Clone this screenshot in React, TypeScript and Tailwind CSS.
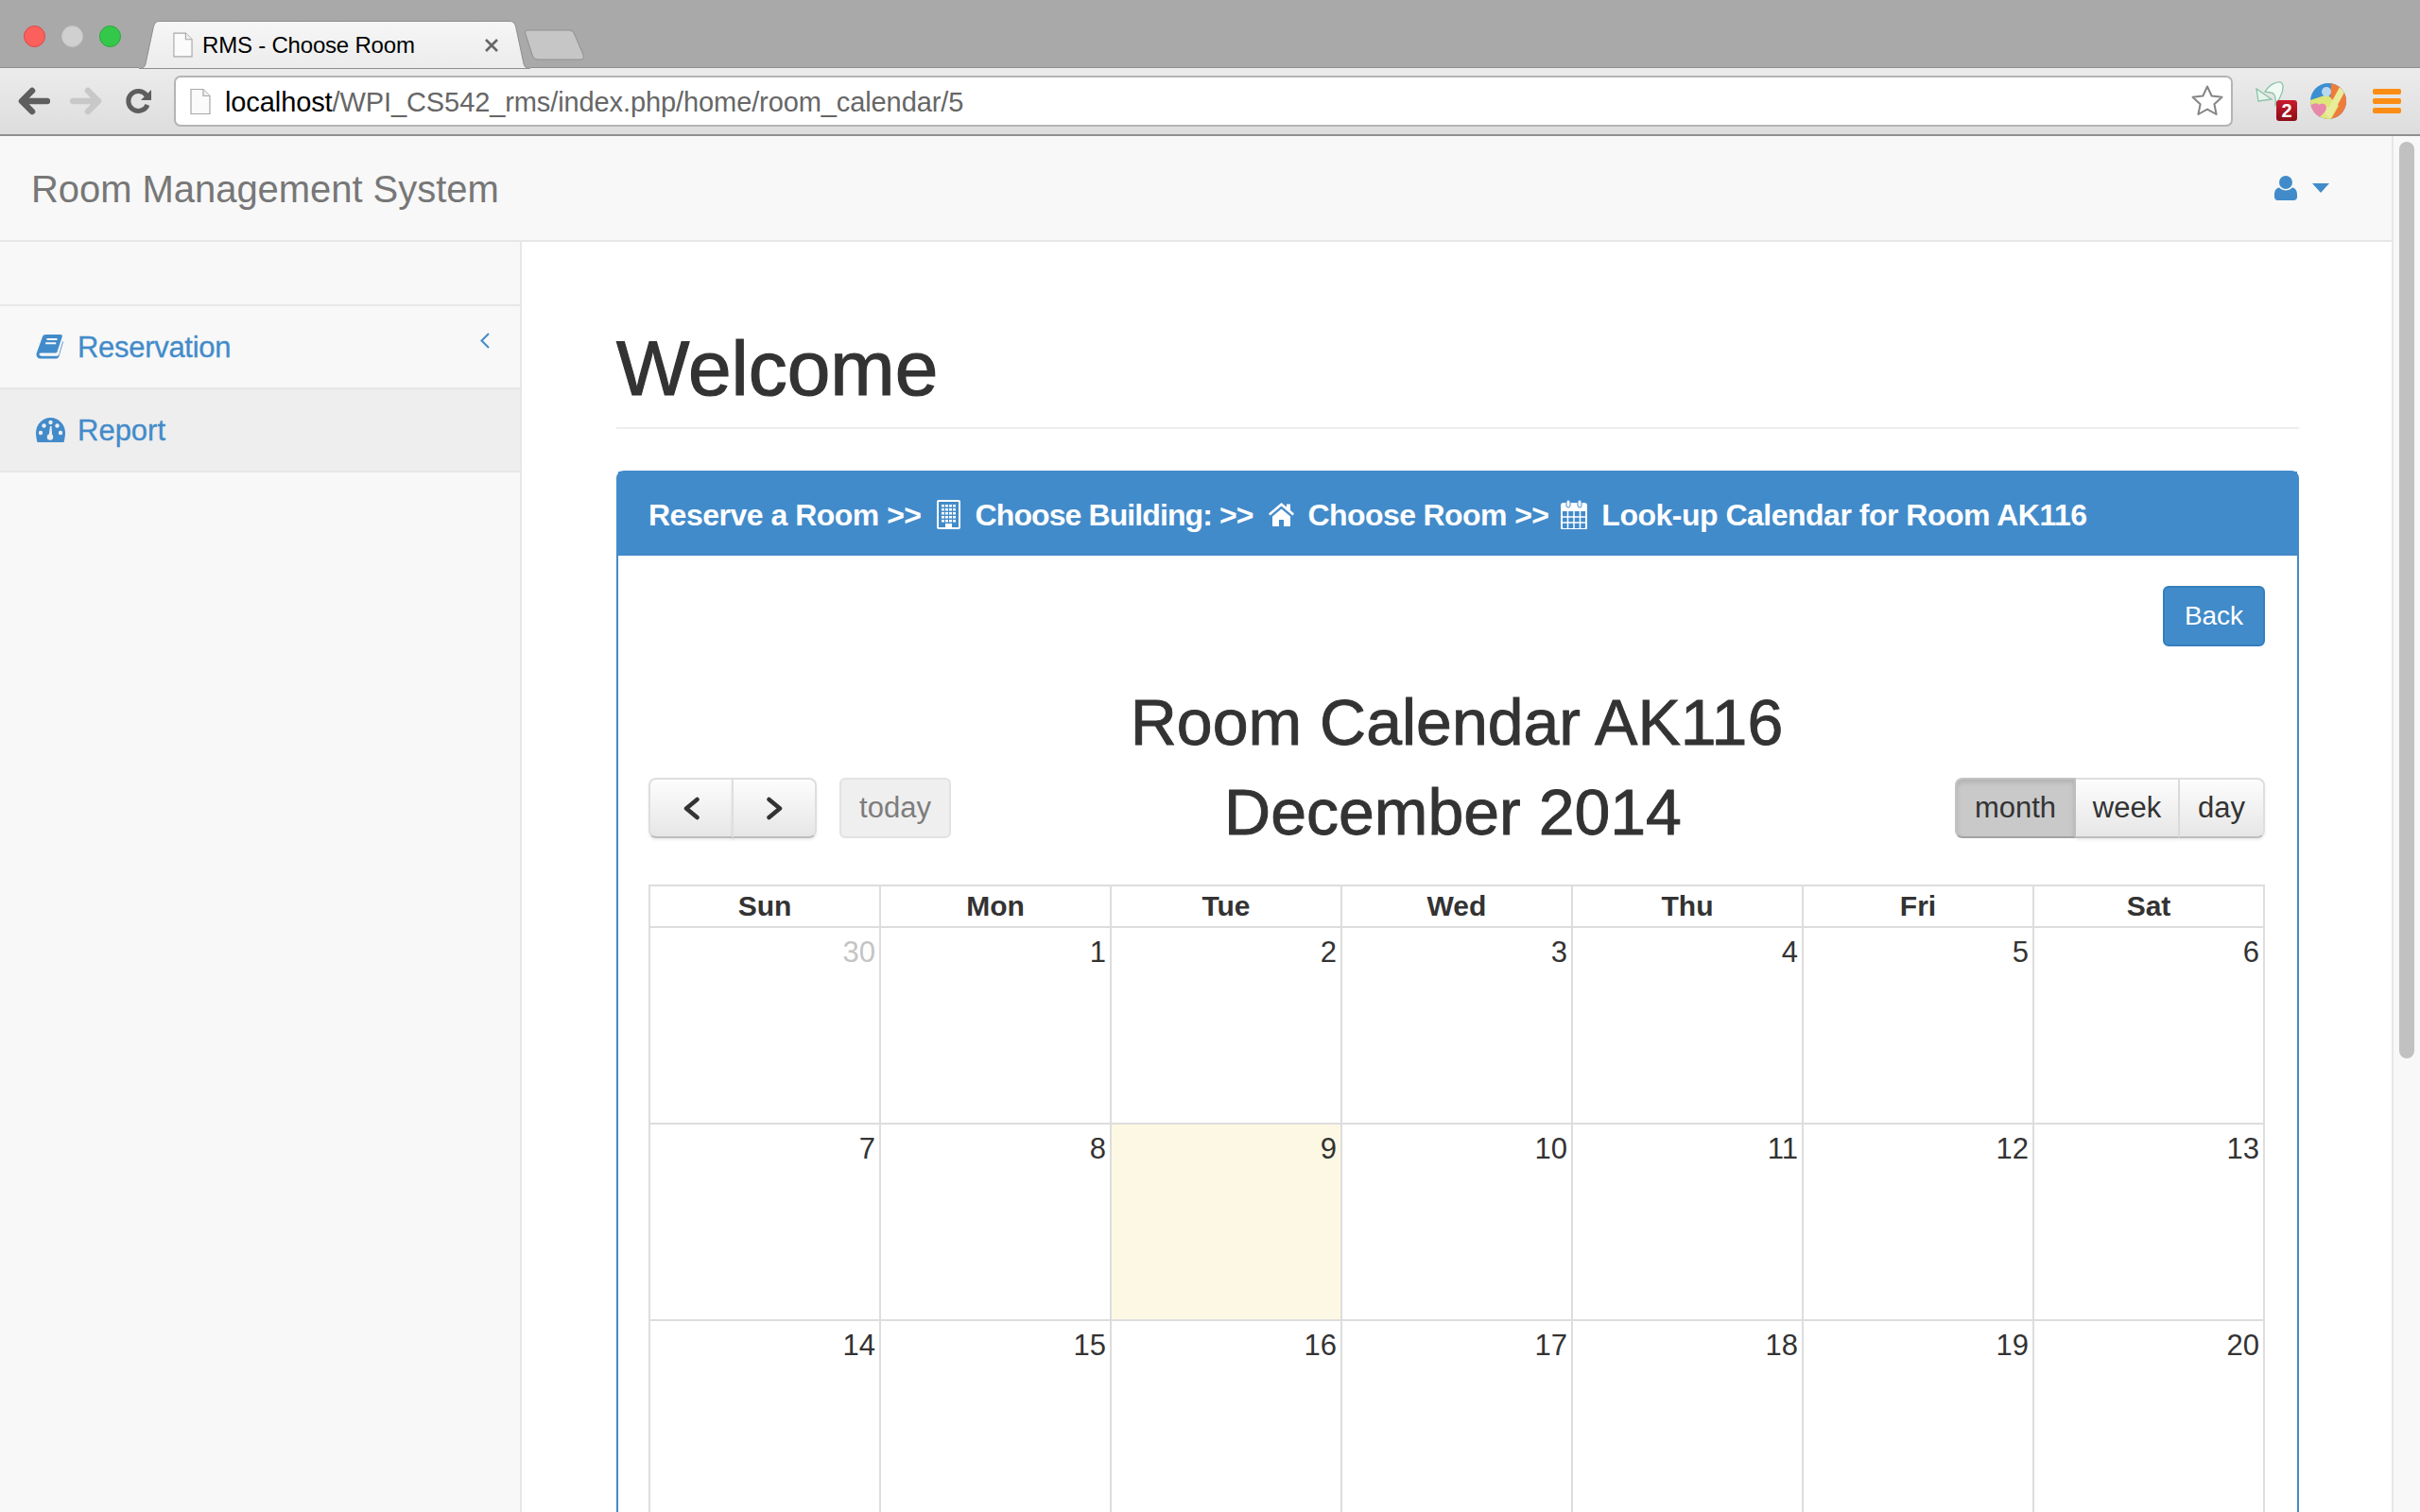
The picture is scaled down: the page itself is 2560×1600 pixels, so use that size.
const weeks: { d: number; muted?: boolean; today?: boolean }[][] = [
  [{ d: 30, muted: true }, { d: 1 }, { d: 2 }, { d: 3 }, { d: 4 }, { d: 5 }, { d: 6 }],
  [{ d: 7 }, { d: 8 }, { d: 9, today: true }, { d: 10 }, { d: 11 }, { d: 12 }, { d: 13 }],
  [{ d: 14 }, { d: 15 }, { d: 16 }, { d: 17 }, { d: 18 }, { d: 19 }, { d: 20 }],
];
const days = ["Sun", "Mon", "Tue", "Wed", "Thu", "Fri", "Sat"];

function PageIcon({ w, h }: { w: number; h: number }) {
  return (
    <svg width={w} height={h} viewBox="0 0 22 28" className="shrink-0">
      <path d="M1 1h13l7 7v19H1z" fill="#fbfbfb" stroke="#a8a8a8" strokeWidth="1.2" />
      <path d="M14 1v7h7" fill="#efefef" stroke="#a8a8a8" strokeWidth="1.2" />
    </svg>
  );
}

function Light({ color, border }: { color: string; border: string }) {
  return <span className="block w-[23px] h-[23px] rounded-full" style={{ background: color, border: `1px solid ${border}` }} />;
}

function BookIcon() {
  return (
    <svg width="29" height="27" viewBox="0 0 29 27" className="shrink-0 -mt-[2px]" fill="currentColor">
      <path d="M10 1h16c1.6 0 2.2 1 1.8 2.3L22.6 19c-.4 1.2-1.1 1.6-2.3 1.6H5.5C3.6 20.6 3 22 4 23c.6.6 1.4.7 2.2.7h15.6c1.4 0 2-.6 2.5-1.8L28.4 8l.6.8-4.3 14.4c-.6 2.2-1.8 3.4-4 3.4H5.5C2 26.6 0 24.2 .6 21z" />
      <path d="M10 1C8.4 1 7.4 2 7 3.2L.6 21c.6-1.6 2-2.4 4-2.4" />
      <path d="M11.5 6h11M10.2 10.2h11" stroke="#f8f8f8" strokeWidth="2" fill="none" />
    </svg>
  );
}

function GaugeIcon() {
  return (
    <svg width="31" height="26" viewBox="0 0 31 26" className="shrink-0" fill="currentColor">
      <path d="M15.5 0C7 0 0 7 0 16c0 3.500 .6 6.500 1.500 10h28c.9-3.500 1.500-6.500 1.500-10C31 7 24 0 15.500 0z" />
      <g fill="#eeeeee">
        <circle cx="5" cy="16" r="2.200" />
        <circle cx="8.500" cy="8.500" r="2.200" />
        <circle cx="15.500" cy="5" r="2.200" />
        <circle cx="22.500" cy="8.500" r="2.200" />
        <circle cx="26" cy="16" r="2.200" />
        <circle cx="15" cy="20.500" r="3.200" />
        <path d="M13.500 20L15 9h1.500l.8 11z" />
      </g>
    </svg>
  );
}

function BuildingIcon() {
  const dots: [number, number][] = [];
  for (let r = 0; r < 5; r++) for (let c = 0; c < 4; c++) dots.push([5 + c * 4, 5 + r * 4]);
  return (
    <svg width="25" height="31" viewBox="0 0 25 31" className="shrink-0 ml-[16px]">
      <rect x="1" y="1" width="23" height="29" rx="1" fill="none" stroke="#fff" strokeWidth="2" />
      {dots.map(([x, y]) => (
        <rect key={`${x}-${y}`} x={x} y={y} width="3" height="2.500" fill="#fff" />
      ))}
      <rect x="9" y="25" width="7" height="5" fill="#fff" />
    </svg>
  );
}

function HomeIcon() {
  return (
    <svg width="27" height="25" viewBox="0 0 27 25" className="shrink-0 ml-[16px]" fill="#fff">
      <path d="M13.500 0L19 4.500V1.500h4v6.500l4 3.500-1.600 2L13.500 3.500 1.600 13.500 0 11.500z" />
      <path d="M13.500 6.500L23 14.500V24c0 .5-.3 1-1 1h-6v-7h-5v7H5c-.7 0-1-.5-1-1v-9.500z" />
    </svg>
  );
}

function CalIcon() {
  return (
    <svg width="28" height="31" viewBox="0 0 28 31" className="shrink-0 ml-[13px]">
      <path d="M3 4h22a2 2 0 0 1 2 2v23a2 2 0 0 1-2 2H3a2 2 0 0 1-2-2V6a2 2 0 0 1 2-2z" fill="none" stroke="#fff" strokeWidth="2" />
      <path d="M1 4h26v8H1z" fill="#fff" />
      <rect x="6" y="0" width="4" height="8" rx="2" fill="#fff" stroke="#428bca" strokeWidth="1" />
      <rect x="18" y="0" width="4" height="8" rx="2" fill="#fff" stroke="#428bca" strokeWidth="1" />
      <path d="M1 18h26M1 24h26M7.500 12v18M14 12v18M20.500 12v18" stroke="#fff" strokeWidth="1.500" />
    </svg>
  );
}

function Chev({ dir }: { dir: "l" | "r" }) {
  return (
    <svg width="19" height="25" viewBox="0 0 19 25" fill="none" stroke="#333" strokeWidth="4.500" strokeLinecap="round" strokeLinejoin="round">
      <path d={dir === "l" ? "M15.500 3L4 12.500 15.500 22" : "M3.500 3L15 12.500 3.500 22"} />
    </svg>
  );
}

function Chrome() {
  return (
    <div className="w-full shrink-0">
      <div className="flex h-[72px] bg-[#a9a9a9]">
        <div className="w-[147px] h-[72px] shrink-0 border-b border-[#8e8e8e] flex items-start gap-[17px] pl-[25px] pt-[27px]">
          <Light color="#fc605c" border="#df4744" />
          <Light color="#d0d0d0" border="#c4c4c4" />
          <Light color="#34c84a" border="#28a83c" />
        </div>
        <div className="relative w-[414px] h-[72px] shrink-0 flex items-center pl-[36px] pt-[23px]">
          <svg width="414" height="73" viewBox="0 0 414 73" className="absolute left-0 top-0">
            <defs>
              <linearGradient id="tabg" x1="0" y1="0" x2="0" y2="1">
                <stop offset="0" stopColor="#f6f6f6" />
                <stop offset="1" stopColor="#ececec" />
              </linearGradient>
            </defs>
            <path d="M0 72.500c4 0 6-1 7-5L15 30c1-5 3-7.500 7-7.500h370c4 0 6 2.500 7 7.500l8 37.500c1 4 3 5 7 5z" fill="url(#tabg)" stroke="#8e8e8e" strokeWidth="1" />
          </svg>
          <span className="relative"><PageIcon w={21} h={27} /></span>
          <span className="relative ml-[10px] text-[24px] leading-none text-black whitespace-nowrap tracking-[-0.2px]">RMS - Choose Room</span>
          <svg width="16" height="16" viewBox="0 0 16 16" className="relative ml-[73px]">
            <path d="M2 2l12 12M14 2L2 14" stroke="#666" strokeWidth="2.600" />
          </svg>
        </div>
        <div className="flex-1 h-[72px] border-b border-[#8e8e8e]">
          <svg width="64" height="34" viewBox="0 0 64 34" className="-ml-[6px] mt-[31px]">
            <path d="M3 1h44c3 0 5 2 6 5l9 21c1 3 0 5-3 5H14c-3 0-5-2-6-5L1 5C0 3 1 1 3 1z" fill="#c6c6c6" stroke="#8f8f8f" />
          </svg>
        </div>
      </div>
      <div className="h-[72px] border-b-2 border-[#8f8f8f] bg-linear-to-b from-[#ececec] to-[#dddddd] flex items-center">
        <div className="w-[184px] shrink-0 flex items-center">
          <svg width="34" height="30" viewBox="0 0 34 30" className="ml-[19px]">
            <path d="M15 4L4 15l11 11M5 15h26" fill="none" stroke="#5e5e5e" strokeWidth="6.500" strokeLinecap="round" strokeLinejoin="round" />
          </svg>
          <svg width="34" height="30" viewBox="0 0 34 30" className="ml-[21px]">
            <path d="M19 4l11 11-11 11M29 15H3" fill="none" stroke="#c8c8c8" strokeWidth="6.500" strokeLinecap="round" strokeLinejoin="round" />
          </svg>
          <svg width="30" height="30" viewBox="0 0 30 30" className="ml-[24px]">
            <path d="M24 19a10.500 10.500 0 1 1-1-10" fill="none" stroke="#5e5e5e" strokeWidth="5" />
            <path d="M28 3v11H17z" fill="#5e5e5e" />
          </svg>
        </div>
        <div className="w-[2178px] h-[54px] shrink-0 bg-white border-2 border-[#b4b4b4] rounded-[7px] flex items-center pl-[15px] pr-[7px]">
          <PageIcon w={22} h={29} />
          <span className="ml-[15px] pt-[2px] text-[29px] leading-none whitespace-nowrap text-[#666] tracking-[-0.1px]">
            <span className="text-black">localhost</span>/WPI_CS542_rms/index.php/home/room_calendar/5
          </span>
          <svg width="36" height="36" viewBox="0 0 36 36" className="ml-auto">
            <path d="M18 2.500l4.600 10 10.900 1.300-8.100 7.400 2.200 10.800L18 26.600 8.400 32l2.200-10.800-8.100-7.400 10.900-1.300z" fill="#fff" stroke="#858585" strokeWidth="2" strokeLinejoin="round" />
          </svg>
        </div>
        <div className="relative ml-[24px] w-[44px] h-[44px] shrink-0">
          <svg width="31" height="28" viewBox="0 0 31 28" className="absolute left-0 top-0">
            <path d="M10 12C15 4 24 0 28 3c3 5-1 15-7 23 1-8-1-13-5-13z" fill="#f1f9f4" stroke="#8cc2a8" strokeWidth="1.300" />
            <path d="M1 9l2 13 14-2z" fill="#e6f4ec" stroke="#8cc2a8" strokeWidth="1.300" />
          </svg>
          <span className="absolute left-[22px] top-[21px] w-[22px] h-[22px] rounded-[3px] bg-linear-to-b from-[#cb1a2e] to-[#8c0c18] text-white text-[20px] leading-[22px] font-bold text-center">2</span>
        </div>
        <svg width="38" height="38" viewBox="0 0 38 38" className="ml-[14px] shrink-0">
          <defs><clipPath id="av"><circle cx="19" cy="19" r="19" /></clipPath></defs>
          <g clipPath="url(#av)">
            <rect width="38" height="38" fill="#3c8fd0" />
            <path d="M22 0h16v38H20z" fill="#ef7b3a" />
            <path d="M0 18l18-6 12 12-8 14H0z" fill="#dfe67a" />
            <path d="M14 26l6 6L34 6" fill="none" stroke="#e9ec9a" strokeWidth="7" />
            <circle cx="17" cy="9" r="5" fill="#b8d8f2" />
            <path d="M0 24c4-4 8-3 9-1 2-2 8-2 8 3 0 5-7 9-9 12H0z" fill="#e889ac" />
          </g>
        </svg>
        <div className="ml-[28px] w-[30px] shrink-0 flex flex-col gap-[4px]">
          <span className="block h-[6px] rounded-[2px] bg-[#fb8d15]" />
          <span className="block h-[6px] rounded-[2px] bg-[#fb8d15]" />
          <span className="block h-[6px] rounded-[2px] bg-[#fb8d15]" />
        </div>
      </div>
    </div>
  );
}

function Sidebar() {
  return (
    <aside className="w-[552px] shrink-0 bg-[#f8f8f8] border-r-2 border-[#e7e7e7] pt-[66px] text-[#428bca]">
      <div className="border-t-2 border-[#e7e7e7]" />
      <div className="h-[86px] flex items-center pl-[38px] pr-[32px]">
        <BookIcon />
        <span className="ml-[15px] text-[31px] leading-none tracking-[-0.3px] [-webkit-text-stroke:0.3px_#428bca]">Reservation</span>
        <svg width="10" height="17" viewBox="0 0 10 17" className="ml-auto -mt-[14px]" fill="none" stroke="#428bca" strokeWidth="2">
          <path d="M9 1L1.500 8.500 9 16" />
        </svg>
      </div>
      <div className="border-t-2 border-[#e7e7e7]" />
      <div className="h-[86px] flex items-center pl-[38px] bg-[#eeeeee]">
        <GaugeIcon />
        <span className="ml-[13px] text-[31px] leading-none [-webkit-text-stroke:0.3px_#428bca]">Report</span>
      </div>
      <div className="border-t-2 border-[#e7e7e7]" />
    </aside>
  );
}

function Calendar() {
  const btn = "h-full flex items-center justify-center bg-linear-to-b from-[#fdfdfd] to-[#e6e6e6] border-2 border-[#dedede] border-b-[#bdbdbd] shadow-[0_2px_3px_rgba(0,0,0,0.08)] text-[#333] text-[31px]";
  return (
    <div>
      <h2 className="text-center text-[68px] leading-[94px] text-[#333] whitespace-nowrap font-normal h-[94px] mt-[33px] [-webkit-text-stroke:0.9px_#333]">Room Calendar AK116</h2>
      <div className="flex items-center justify-between h-[64px] mt-[12px]">
        <div className="flex h-full">
          <div className="flex h-full w-[178px]">
            <div className={`${btn} w-[90px] rounded-l-[8px]`}><Chev dir="l" /></div>
            <div className={`${btn} w-[90px] -ml-[2px] rounded-r-[8px]`}><Chev dir="r" /></div>
          </div>
          <div className="ml-[24px] w-[118px] h-full flex items-center justify-center rounded-[6px] bg-[#efefef] border-2 border-[#e2e2e2] text-[#7d7d7d] text-[31px]">today</div>
        </div>
        <h2 className="text-[68px] pt-[7px] leading-none text-[#333] whitespace-nowrap font-normal [-webkit-text-stroke:0.9px_#333]">December 2014</h2>
        <div className="flex h-full w-[328px]">
          <div className="h-full w-[128px] flex items-center justify-center rounded-l-[8px] bg-[#c9c9c9] border-2 border-[#c2c2c2] border-b-[#a3a3a3] shadow-[inset_0_3px_5px_rgba(0,0,0,0.12)] text-[#333] text-[31px]">month</div>
          <div className={`${btn} w-[110px] border-l-0`}>week</div>
          <div className={`${btn} w-[90px] border-l-0 rounded-r-[8px]`}>day</div>
        </div>
      </div>
      <table className="w-full table-fixed border-collapse mt-[49px] text-[#333]">
        <thead>
          <tr className="h-[44px]">
            {days.map((d) => (
              <th key={d} className="border-2 border-[#dddddd] text-[30px] leading-none font-bold text-center">{d}</th>
            ))}
          </tr>
        </thead>
        <tbody>
          {weeks.map((w, i) => (
            <tr key={i} className="h-[208px]">
              {w.map((c) => (
                <td key={c.d} className={`border-2 border-[#dddddd] align-top text-right text-[31px] leading-none pt-[10px] pr-[4px] ${c.today ? "bg-[#fcf8e3]" : ""} ${c.muted ? "text-[#c4c4c4]" : ""}`}>{c.d}</td>
              ))}
            </tr>
          ))}
        </tbody>
      </table>
    </div>
  );
}

function Main() {
  return (
    <main className="flex-1 min-w-0 bg-white pl-[100px] pr-[98px]">
      <h1 className="text-[82px] leading-none text-[#333] pt-[93px] pb-[21px] border-b-2 border-[#eeeeee] font-normal [-webkit-text-stroke:1.2px_#333]">Welcome</h1>
      <section className="mt-[44px] border-2 border-[#428bca] rounded-t-[8px]">
        <div className="h-[89px] -mt-px pt-[2px] bg-[#428bca] text-white text-[32px] font-bold flex items-center pl-[32px] whitespace-nowrap tracking-[-0.5px]">
          <span>Reserve a Room &gt;&gt;</span>
          <BuildingIcon />
          <span className="ml-[16px] tracking-[-0.9px]">Choose Building: &gt;&gt;</span>
          <HomeIcon />
          <span className="ml-[15px] tracking-[-0.6px]">Choose Room &gt;&gt;</span>
          <CalIcon />
          <span className="ml-[15px]">Look-up Calendar for Room AK116</span>
        </div>
        <div className="pl-[32px] pr-[34px] pt-[32px]">
          <div className="flex justify-end">
            <button className="w-[108px] h-[64px] rounded-[6px] bg-[#428bca] border-2 border-[#357ebd] text-white text-[28px]">Back</button>
          </div>
          <Calendar />
        </div>
      </section>
    </main>
  );
}

export default function App() {
  return (
    <div className="w-[2560px] h-[1600px] overflow-hidden flex flex-col font-['Liberation_Sans',Arial,sans-serif]">
      <Chrome />
      <div className="flex-1 min-h-0 flex">
        <div className="flex-1 min-w-0 flex flex-col">
          <nav className="h-[112px] shrink-0 bg-[#f8f8f8] border-b-2 border-[#e7e7e7] flex items-center pl-[33px] pr-[66px]">
            <span className="pt-[2px] text-[40px] leading-none text-[#777] tracking-[-0.05px]">Room Management System</span>
            <span className="ml-auto flex items-center text-[#428bca]">
              <svg width="24" height="26" viewBox="0 0 24 26" fill="currentColor">
                <circle cx="12" cy="7" r="7" />
                <path d="M5 12.500c2 2 4.500 3 7 3s5-1 7-3c3 .5 5 3 5 7.500v2.500c0 2-1.500 3.500-3.500 3.500h-17C1.500 26 0 24.500 0 22.500V20c0-4.500 2-7 5-7.500z" />
              </svg>
              <svg width="18" height="10" viewBox="0 0 18 10" className="ml-[16px]" fill="currentColor">
                <path d="M0 0h18L9 10z" />
              </svg>
            </span>
          </nav>
          <div className="flex-1 min-h-0 flex">
            <Sidebar />
            <Main />
          </div>
        </div>
        <div className="w-[30px] shrink-0 bg-[#f8f8f8] border-l-2 border-[#e7e7e7] pl-[6px] pt-[6px]">
          <div className="w-[16px] h-[970px] rounded-full bg-[#c1c1c1]" />
        </div>
      </div>
    </div>
  );
}
